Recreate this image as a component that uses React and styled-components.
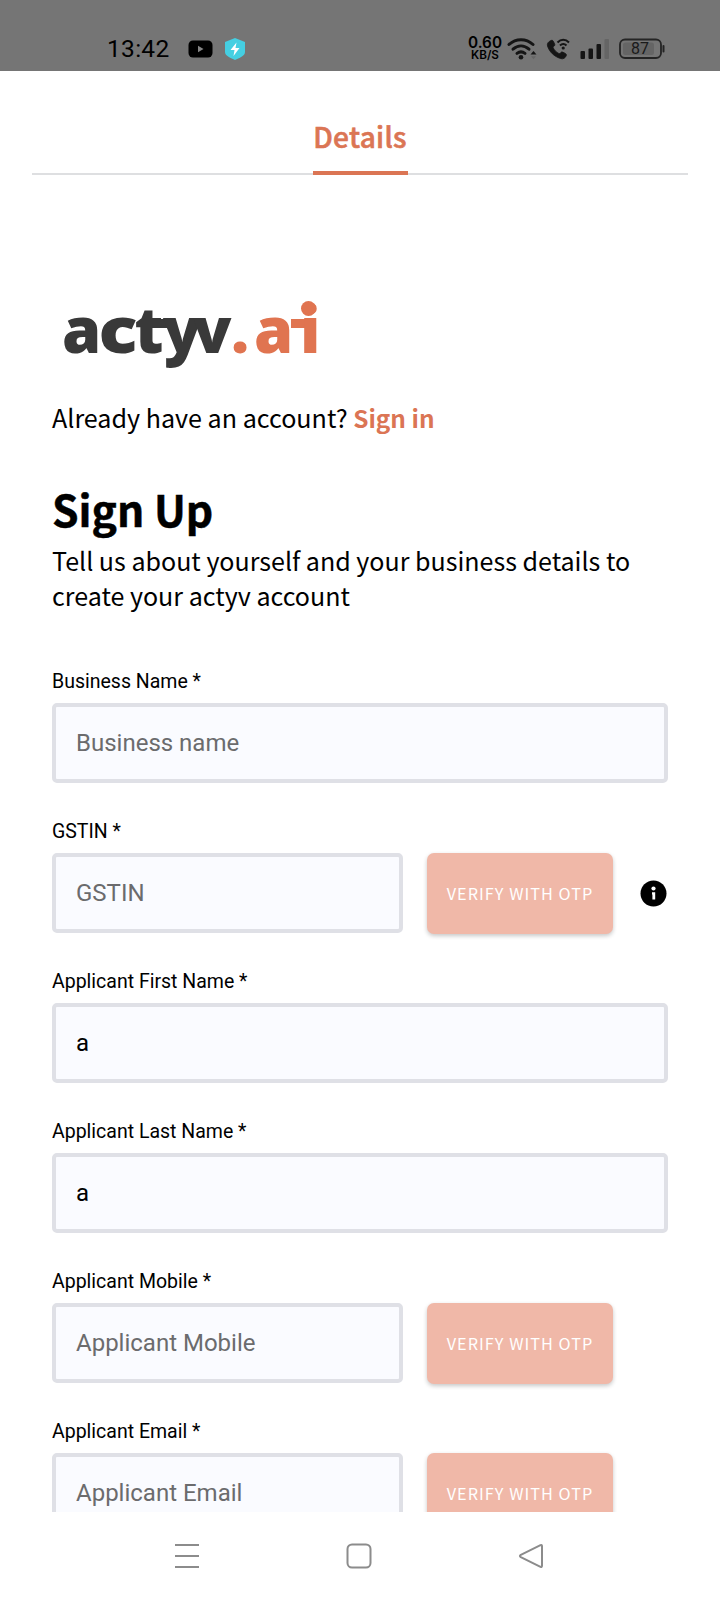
import React from "react";
import styled, { createGlobalStyle } from "styled-components";

const accent = "#db7554";
const sourceSans = `"Source Sans Pro", "Noto Sans CJK SC", "Noto Sans", sans-serif`;

const GlobalStyle = createGlobalStyle`
  *, *::before, *::after { box-sizing: border-box; }
  body { margin: 0; background: #fff; color: #000; font-family: Roboto, sans-serif; }
  h1, p { margin: 0; }
`;

const Screen = styled.div`
  display: flex;
  flex-direction: column;
  width: 720px;
  height: 1600px;
  overflow: hidden;
  background: #fff;
`;

const StatusBar = styled.header`
  display: flex;
  flex: none;
  align-items: center;
  justify-content: space-between;
  height: 71px;
  padding: 26px 55px 0 107px;
  background: #757575;
`;

const StatusGroup = styled.div`
  display: flex;
  align-items: center;
  svg { display: block; flex: none; }
`;

const Clock = styled.span`
  width: 63px;
  margin-right: 18px;
  font-size: 24.5px;
  line-height: 28px;
  letter-spacing: 0.3px;
  white-space: nowrap;
`;

const Speed = styled.div`
  display: flex;
  flex-direction: column;
  align-items: center;
  width: 36px;
  margin-right: 4px;
  font-weight: 600;
  font-family: Inter, sans-serif;
`;

const SpeedLine = styled.span`
  font-size: ${(p) => p.$size}px;
  line-height: 13px;
  white-space: nowrap;
`;

const Main = styled.main`
  flex: 1;
  min-height: 0;
  overflow: hidden;
`;

const Tabs = styled.nav`
  display: flex;
  justify-content: center;
  height: 104px;
  margin: 0 32px;
  border-bottom: 2px solid #dedfe1;
`;

const Tab = styled.a`
  height: 104px;
  width: 95px;
  padding-top: 45px;
  border-bottom: 4px solid ${accent};
  color: ${accent};
  font: 500 28px/40px ${sourceSans};
  letter-spacing: 0.3px;
  -webkit-text-stroke: 0.6px ${accent};
  text-align: center;
  white-space: nowrap;
`;

const Page = styled.section`
  padding: 0 52px;
`;

const Logo = styled.svg`
  display: block;
  width: 280px;
  height: 90px;
  margin: 115px 0 0 -2px;
  overflow: visible;
  font-family: "Open Sans", "Noto Sans", sans-serif;
  font-weight: 800;
`;

const Prompt = styled.p`
  margin-top: 17px;
  font: 400 25.1px/40px ${sourceSans};
  white-space: nowrap;
`;

const SignIn = styled.a`
  color: ${accent};
  font-weight: 700;
  font-size: 24.4px;
`;

const Title = styled.h1`
  margin-top: 41px;
  font: 700 42.6px/60px ${sourceSans};
  -webkit-text-stroke: 0.5px #000;
  white-space: nowrap;
`;

const Intro = styled.p`
  margin-top: 4px;
  font: 400 25.05px/34.5px ${sourceSans};
  white-space: nowrap;
`;

const Form = styled.form`
  display: flex;
  flex-direction: column;
  margin-top: 57px;
`;

const Field = styled.div`
  height: 150px;
`;

const Label = styled.label`
  display: block;
  height: 34px;
  padding-top: 1px;
  font-size: 19.5px;
  line-height: 24px;
`;

const Row = styled.div`
  display: flex;
  align-items: flex-start;
`;

const Input = styled.input`
  width: ${(p) => (p.$short ? 351 : 616)}px;
  height: 80px;
  padding: 0 20px;
  border: 4px solid #dfe0e6;
  border-radius: 5px;
  background: #fafbff;
  color: #000;
  font: 400 24px/30px Roboto, sans-serif;
  &::placeholder { color: #6b6b6d; opacity: 1; }
`;

const Verify = styled.button`
  width: 186px;
  height: 81px;
  margin-left: 24px;
  padding: 0 0 2px;
  border: 0;
  border-radius: 7px;
  background: #f0b8a8;
  box-shadow: 0 2px 4px rgba(0, 0, 0, 0.22);
  color: #fff;
  font: 400 16.3px/24px ${sourceSans};
  letter-spacing: 1.02px;
  white-space: nowrap;
`;

const InfoIcon = styled.svg`
  display: block;
  margin: 27px 0 0 27px;
`;

const NavBar = styled.footer`
  display: flex;
  flex: none;
  align-items: center;
  justify-content: space-between;
  height: 88px;
  padding: 0 176px 0 174px;
  background: #fff;
  svg { display: block; fill: none; stroke: #8c8c8c; stroke-width: 2; stroke-linejoin: round; }
`;

const fields = [
  { label: "Business Name *", placeholder: "Business name" },
  { label: "GSTIN *", placeholder: "GSTIN", verify: true, info: true },
  { label: "Applicant First Name *", value: "a" },
  { label: "Applicant Last Name *", value: "a" },
  { label: "Applicant Mobile *", placeholder: "Applicant Mobile", verify: true },
  { label: "Applicant Email *", placeholder: "Applicant Email", verify: true },
];

function Status() {
  return (
    <StatusBar>
      <StatusGroup>
        <Clock>13:42</Clock>
        <svg width="25" height="18" viewBox="0 0 25 18">
          <rect x="0.5" y="0.5" width="24" height="17" rx="4.5" />
          <path d="M10 5.8v6.4l5.5-3.2z" fill="#858585" />
        </svg>
        <svg width="22" height="24" viewBox="0 0 22 24" style={{ marginLeft: 11 }}>
          <path d="M11 1 21 5v10c0 4-6 6-10 8-4-2-10-4-10-8V5z" fill="#45cfe2" />
          <path d="M12.5 5.5 6.5 13h4l-1 6 6-8h-4z" fill="#fff" />
        </svg>
      </StatusGroup>
      <StatusGroup>
        <Speed>
          <SpeedLine $size={15.3}>0.60</SpeedLine>
          <SpeedLine $size={11.7}>KB/S</SpeedLine>
        </Speed>
        <svg width="30" height="24" viewBox="0 0 30 24" fill="none" stroke="#151515" strokeWidth="3" strokeLinecap="round">
          <path d="M2 7.5c7-6.5 17-6.5 24 0" />
          <path d="M6 12.2c5-4.4 11-4.4 16 0" />
          <path d="M10 16.4c2.6-2 5.4-2 8 0" />
          <circle cx="14" cy="20.3" r="2.3" fill="#151515" stroke="none" />
          <path d="M23.5 17.5 26.5 14l3 3.5z" fill="#151515" stroke="none" />
          <path d="M24 19.3h5l-2.5 3z" fill="#666" stroke="none" />
        </svg>
        <svg width="25" height="24" viewBox="0 0 25 24" style={{ marginLeft: 9 }} fill="none" stroke="#151515">
          <path d="M5 3.5c1.2-.5 2 0 2.5 1l1.2 2.7c.4.9-.1 1.5-.9 2.1-.7.5-.9 1-.5 1.7 1.3 2.5 3 4.2 5.4 5.4.8.4 1.2.2 1.8-.5.6-.8 1.2-1.2 2.1-.8l2.7 1.3c1 .5 1.4 1.3.9 2.4-1 2.3-3 3.5-5.4 2.8C8 19.5 3.5 15 1.5 9 .8 6.5 2.5 4.5 5 3.5z" fill="#151515" strokeWidth="0.8" />
          <path d="M11.5 5.5c3.5-3.6 8-3.6 11.5 0M14 8.5c2-2 4.500-2 6.500 0" strokeWidth="2" />
          <circle cx="17.2" cy="11" r="1.6" fill="#151515" stroke="none" />
        </svg>
        <svg width="29" height="20" viewBox="0 0 29 20" style={{ marginLeft: 9 }} fill="#151515">
          <rect x="0.5" y="12" width="4.5" height="8" rx="1" />
          <rect x="8.5" y="9.5" width="4.5" height="10.5" rx="1" />
          <rect x="16.5" y="5" width="4.5" height="15" rx="1" />
          <rect x="24.5" y="0" width="4.5" height="20" rx="1" fill="#656565" />
        </svg>
        <svg width="46" height="22" viewBox="0 0 46 22" style={{ marginLeft: 10 }}>
          <rect x="1" y="1.5" width="41" height="18.5" rx="5" fill="none" stroke="#242424" strokeWidth="1.8" />
          <rect x="4" y="4.5" width="31" height="12.5" rx="2.5" fill="#656565" />
          <rect x="43.5" y="7" width="2" height="7.5" rx="1" fill="#242424" />
          <text x="21" y="16.2" textAnchor="middle" fontFamily="Roboto" fontSize="16" fill="#1a1a1a">87</text>
        </svg>
      </StatusGroup>
    </StatusBar>
  );
}

function Brand() {
  return (
    <Logo viewBox="50 290 280 90" role="img" aria-label="actyv.ai">
      <rect x="146" y="319" width="24" height="9" fill="#393939" />
      <rect x="190" y="319" width="14" height="8" fill="#393939" />
      <rect x="291" y="319" width="16" height="9" fill="#e07450" />
      <text x="62" y="353" fontSize="63" fill="#393939">a</text>
      <text transform="translate(98.5 353) scale(1.15 1)" fontSize="63" fill="#393939">c</text>
      <text x="134.5" y="353" fontSize="63" fill="#393939">t</text>
      <text x="163" y="353" fontSize="63" fill="#393939">y</text>
      <text x="193" y="353" fontSize="63" fill="#393939">v</text>
      <text x="231 254 300" y="353" fontSize="63" fill="#e07450">.ai</text>
      <circle cx="308.5" cy="308.5" r="7.5" fill="#e07450" />
    </Logo>
  );
}

export default function App() {
  return (
    <Screen>
      <GlobalStyle />
      <Status />
      <Main>
        <Tabs><Tab>Details</Tab></Tabs>
        <Page>
          <Brand />
          <Prompt>Already have an account? <SignIn>Sign in</SignIn></Prompt>
          <Title>Sign Up</Title>
          <Intro>Tell us about yourself and your business details to<br />create your actyv account</Intro>
          <Form>
            {fields.map((f) => (
              <Field key={f.label}>
                <Label>{f.label}</Label>
                <Row>
                  <Input $short={f.verify} placeholder={f.placeholder} defaultValue={f.value} aria-label={f.label} />
                  {f.verify && <Verify type="button">VERIFY WITH OTP</Verify>}
                  {f.info && (
                    <InfoIcon width="27" height="27" viewBox="0 0 27 27">
                      <circle cx="13.5" cy="13.5" r="13" />
                      <circle cx="13.5" cy="8.5" r="2.1" fill="#fff" />
                      <path d="M12 12.2h3.2v7.3h-2.800v-5H12z" fill="#fff" />
                    </InfoIcon>
                  )}
                </Row>
              </Field>
            ))}
          </Form>
        </Page>
      </Main>
      <NavBar>
        <svg width="26" height="26" viewBox="0 0 26 26"><path d="M1 2h24M1 13h24M1 24h24" /></svg>
        <svg width="26" height="26" viewBox="0 0 26 26"><rect x="1.5" y="1.5" width="23" height="23" rx="4.5" /></svg>
        <svg width="26" height="26" viewBox="0 0 26 26"><path d="M22.5 2.2 2.8 11.8q-1.8 1.2 0 2.4L22.5 23.8q1.5.5 1.5-1V3.2q0-1.5-1.5-1z" /></svg>
      </NavBar>
    </Screen>
  );
}
